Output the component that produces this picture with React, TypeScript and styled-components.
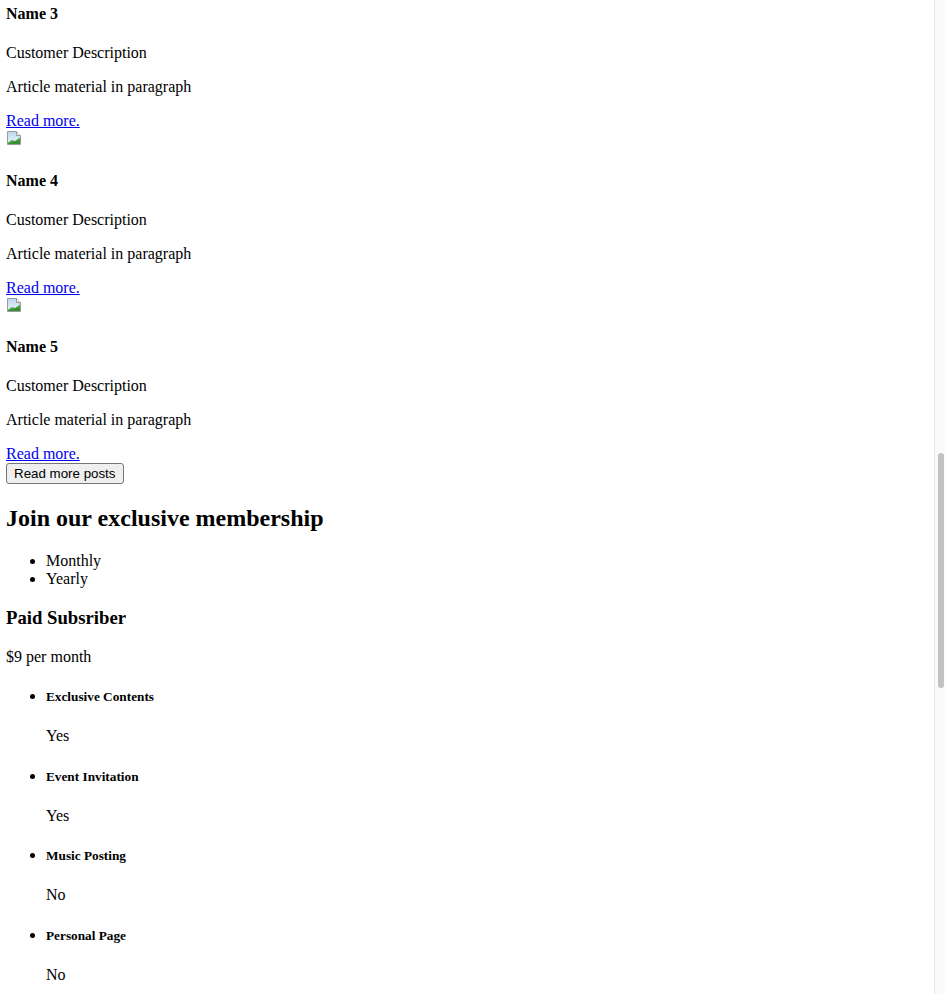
import React from "react";
import styled, { createGlobalStyle } from "styled-components";

const GlobalStyle = createGlobalStyle`
  html, body {
    margin: 0;
    background: #ffffff;
  }
  body {
    font-family: "Liberation Serif", "Times New Roman", serif;
    font-size: 16px;
    color: #000000;
  }
`;

// the window is scrolled down: the page starts mid-way through the posts
const Page = styled.div`
  box-sizing: border-box;
  height: 994px;
  overflow: hidden;
  padding: 5px 19px 0 6px;
`;

const BulletList = styled.ul`
  margin: 16px 0;
  padding-left: 40px;
  list-style: disc;
`;

const SectionTitle = styled.h2`
  font-size: 24px;
  font-weight: 700;
  margin: 20.92px 0 19.92px;
`;

const PlanTitle = styled.h3`
  font-size: 18.72px;
  font-weight: 700;
  margin: 18.72px 0;
`;

const Name = styled.h4<{ $flush?: boolean }>`
  font-size: 16px;
  font-weight: 700;
  margin: ${(p) => (p.$flush ? "0 0 21.28px" : "21.28px 0")};
`;

const Feature = styled.h5`
  font-size: 13.28px;
  font-weight: 700;
  margin: 21.9px 0 21.6px;
`;

const Para = styled.p`
  margin: 16px 0;
`;

const MoreLink = styled.a`
  color: #0000ee;
  text-decoration: underline;
`;

const Button = styled.button`
  font-family: "Liberation Sans", Arial, sans-serif;
  font-size: 13.33px;
  color: #000000;
  background: #efefef;
  border: 1px solid #767676;
  border-radius: 3px;
  padding: 1px 7px;
  height: 21px;
  line-height: normal;
  cursor: default;
`;

const ImageIcon = styled.svg`
  width: 16px;
  height: 16px;
  vertical-align: baseline;
`;

const ScrollTrack = styled.div`
  position: fixed;
  top: 0;
  right: 0;
  width: 10px;
  height: 100%;
  background: #fafafa;
  border-left: 1px solid #e6e6e6;
`;

const ScrollThumb = styled.div`
  margin: 453px 1px 0 3px;
  height: 235px;
  border-radius: 4px;
  background: #c1c1c1;
`;

const BrokenImage = () => (
  <ImageIcon viewBox="0 0 16 16" aria-hidden="true">
    <defs>
      <linearGradient id="sky" x1="0" y1="0" x2="0" y2="1">
        <stop offset="0" stopColor="#b9d5ee" />
        <stop offset="1" stopColor="#f4f8fb" />
      </linearGradient>
    </defs>
    <path d="M1.5 1.5H10.5L14.5 5.5V14.5H1.5Z" fill="url(#sky)" stroke="#9a9a9a" />
    <path d="M10.5 1.5V5.5H14.5" fill="#eeeeee" stroke="#9a9a9a" />
    <path d="M2 14V12.5L6 10L9 11L14 7.5V14Z" fill="#4caa45" />
    <path d="M2 14L7 11.8L14 10V14Z" fill="#3a8f35" />
  </ImageIcon>
);

const Post = ({ n, cut }: { n: number; cut?: boolean }) => (
  <div>
    {!cut && <BrokenImage />}
    <Name $flush={cut}>Name {n}</Name>
    <Para>Customer Description</Para>
    <Para>Article material in paragraph</Para>
    <MoreLink href="#">Read more.</MoreLink>
  </div>
);

const paidFeatures: [string, string][] = [
  ["Exclusive Contents", "Yes"],
  ["Event Invitation", "Yes"],
  ["Music Posting", "No"],
  ["Personal Page", "No"],
];

const FeatureList = ({ items }: { items: [string, string][] }) => (
  <BulletList>
    {items.map(([label, value]) => (
      <li key={label}>
        <Feature>{label}</Feature>
        <Para>{value}</Para>
      </li>
    ))}
  </BulletList>
);

export default function App() {
  return (
    <>
      <GlobalStyle />
      <Page>
        <section>
          <Post n={3} cut />
          <Post n={4} />
          <Post n={5} />
          <div>
            <Button>Read more posts</Button>
          </div>
        </section>
        <section>
          <SectionTitle>Join our exclusive membership</SectionTitle>
          <BulletList>
            <li>Monthly</li>
            <li>Yearly</li>
          </BulletList>
          <div>
            <PlanTitle>Paid Subsriber</PlanTitle>
            <Para>$9 per month</Para>
            <FeatureList items={paidFeatures} />
          </div>
        </section>
      </Page>
      <ScrollTrack>
        <ScrollThumb />
      </ScrollTrack>
    </>
  );
}
